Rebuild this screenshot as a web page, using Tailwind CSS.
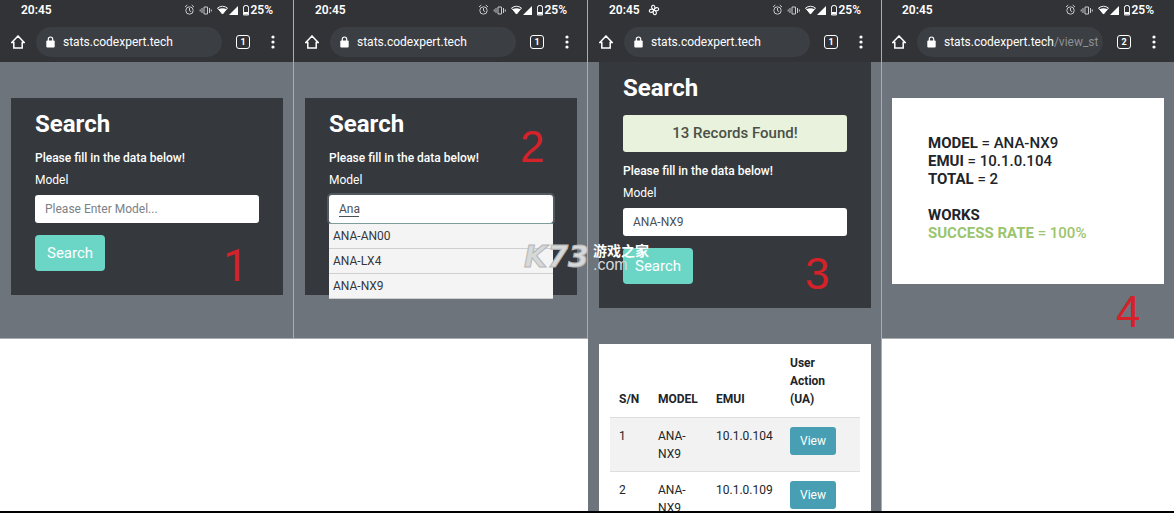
<!DOCTYPE html>
<html lang="en">

<head>
    <meta charset="UTF-8">
    <meta name="viewport" content="width=device-width, initial-scale=1.0">
    <title>Stats - How to search</title>
    <script src="https://cdn.jsdelivr.net/npm/@tailwindcss/browser@4"></script>
</head>

<body class="bg-white font-['Roboto',sans-serif] text-xs leading-[18px] text-[#212529]">
    <!-- shared icons -->
    <svg class="hidden">
        <symbol id="status" viewBox="0 0 66 14">
            <g fill="none" stroke="#c9cacc" stroke-width="1">
                <circle cx="5.500" cy="7.500" r="3.700" />
                <path d="M5.500 5v2.700l1.700 1M1 4l2.300-2M10 4L7.700 2" />
                <path d="M20 4h3.500v7H20zM18 5v5M25.500 5v5M16.200 6.500v2M27.300 6.500v2" />
            </g>
            <path d="M33.500 5q5-3.500 10 0L38.500 11z" fill="none" stroke="#fff" stroke-width=".9" />
            <path d="M34.500 6.200q4-2 8 0L38.500 11.200z" fill="#fff" />
            <path d="M54 3v9h-9z" fill="#fff" />
            <path d="M59.500 3.500h1v-1h3v1h1v8.500h-5z" fill="none" stroke="#e8e8e8" />
            <path d="M60 9h4v2.500h-4z" fill="#fff" />
        </symbol>
        <symbol id="home" viewBox="0 0 14 14">
            <path d="M.8 7.500L7 1l6.200 6.500H11.200V13H2.800V7.500z" fill="none" stroke="#fff" stroke-width="1.500" />
        </symbol>
        <symbol id="lock" viewBox="0 0 9 12">
            <path d="M2.300 5V3.200a2.200 2.200 0 0 1 4.400 0V5" fill="none" stroke="#fff" stroke-width="1.200" />
            <rect x=".3" y="4.500" width="8.400" height="7" rx="1" fill="#fff" />
        </symbol>
        <symbol id="dots" viewBox="0 0 4 14">
            <circle cx="2" cy="2" r="1.600" fill="#fff" />
            <circle cx="2" cy="7" r="1.600" fill="#fff" />
            <circle cx="2" cy="12" r="1.600" fill="#fff" />
        </symbol>
        <symbol id="fan" viewBox="0 0 12 12">
            <g fill="none" stroke="#fff" stroke-width="1.100">
                <path d="M6 6C3 5 3 1.500 5 1.300S7.500 4 6 6z" />
                <path d="M6 6c1-3 4.500-3 4.700-1S8 7.500 6 6z" />
                <path d="M6 6c3 1 3 4.500 1 4.700S4.500 8 6 6z" />
                <path d="M6 6C5 9 1.500 9 1.300 7S4 4.500 6 6z" />
            </g>
        </symbol>
    </svg>

    <div class="relative grid h-screen grid-cols-[294fr_294fr_294fr_292fr] overflow-hidden border-b-2 border-black">

        <!-- step 1 -->
        <section class="relative overflow-hidden">
            <div class="border-r border-b border-[#a9adb2] bg-[#6d747c]">
                <header class="bg-[#323337] pb-[5px] text-white">
                    <div class="flex h-5 items-center justify-between pr-5 pl-[21px] font-semibold">
                        <span>20:45</span>
                        <span class="flex items-center"><svg class="h-[14px] w-[66px]"><use href="#status" /></svg>25%</span>
                    </div>
                    <div class="flex items-center pt-[7px] pr-[18px] pl-[11px]">
                        <a href="#" aria-label="Home"><svg class="size-[14px]"><use href="#home" /></svg></a>
                        <div class="mr-3.5 ml-[11px] flex h-[30px] min-w-0 flex-1 items-center gap-2 rounded-full bg-[#3b3e42] px-2.5">
                            <svg class="h-3 w-[9px] shrink-0"><use href="#lock" /></svg>
                            <span class="truncate">stats.codexpert.tech</span>
                        </div>
                        <button class="size-[14px] rounded-[3px] border border-white text-[9px] leading-3 font-bold">1</button>
                        <button aria-label="Menu" class="ml-[21px]"><svg class="h-[14px] w-1"><use href="#dots" /></svg></button>
                    </div>
                </header>
                <main class="pt-9 pr-2.5 pb-[43px] pl-[11px]">
                    <form class="bg-[#35393d] px-6 pt-3 pb-6 text-white">
                        <h1 class="mb-[11px] text-2xl leading-7 font-bold">Search</h1>
                        <p class="mb-1 font-medium">Please fill in the data below!</p>
                        <label for="model1" class="mb-1.5 block">Model</label>
                        <input id="model1" type="text" placeholder="Please Enter Model..." class="block h-7 w-full rounded-[3px] bg-white px-2.5 text-[#495057] placeholder:text-[#7b8187]">
                        <button type="button" class="mt-3 h-9 rounded bg-[#6cd6c6] px-3 text-[15px]">Search</button>
                    </form>
                </main>
            </div>
            <span class="absolute top-[240px] left-[223px] text-[44px] leading-[52px] text-[#d3222a]">1</span>
        </section>

        <!-- step 2 -->
        <section class="relative overflow-hidden">
            <div class="border-r border-b border-[#a9adb2] bg-[#6d747c]">
                <header class="bg-[#323337] pb-[5px] text-white">
                    <div class="flex h-5 items-center justify-between pr-5 pl-[21px] font-semibold">
                        <span>20:45</span>
                        <span class="flex items-center"><svg class="h-[14px] w-[66px]"><use href="#status" /></svg>25%</span>
                    </div>
                    <div class="flex items-center pt-[7px] pr-[18px] pl-[11px]">
                        <a href="#" aria-label="Home"><svg class="size-[14px]"><use href="#home" /></svg></a>
                        <div class="mr-3.5 ml-[11px] flex h-[30px] min-w-0 flex-1 items-center gap-2 rounded-full bg-[#3b3e42] px-2.5">
                            <svg class="h-3 w-[9px] shrink-0"><use href="#lock" /></svg>
                            <span class="truncate">stats.codexpert.tech</span>
                        </div>
                        <button class="size-[14px] rounded-[3px] border border-white text-[9px] leading-3 font-bold">1</button>
                        <button aria-label="Menu" class="ml-[21px]"><svg class="h-[14px] w-1"><use href="#dots" /></svg></button>
                    </div>
                </header>
                <main class="pt-9 pr-2.5 pb-[43px] pl-[11px]">
                    <form class="bg-[#35393d] px-6 pt-3 pb-6 text-white">
                        <h1 class="mb-[11px] text-2xl leading-7 font-bold">Search</h1>
                        <p class="mb-1 font-medium">Please fill in the data below!</p>
                        <label for="model2" class="mb-1.5 block">Model</label>
                        <!-- suggestions hang over the bottom of the form -->
                        <div class="relative mb-12">
                            <input id="model2" type="text" value="Ana" class="block h-7 w-full rounded-[3px] bg-white px-2.5 text-[#495057] ring-2 ring-[#50595f]">
                            <span class="absolute bottom-1.5 left-2.5 h-px w-5 bg-[#495057]"></span>
                            <ul class="absolute inset-x-0 top-full border-t border-[#7d9c9c] bg-[#f4f4f4] text-[#33373b]">
                                <li class="h-[25px] border-b border-[#cfcfcf] px-1 leading-6">ANA-AN00</li>
                                <li class="h-[25px] border-b border-[#cfcfcf] px-1 leading-6">ANA-LX4</li>
                                <li class="h-[25px] border-b border-[#cfcfcf] px-1 leading-6">ANA-NX9</li>
                            </ul>
                        </div>
                    </form>
                </main>
            </div>
            <span class="absolute top-[121px] left-[226px] font-['Liberation_Sans',sans-serif] text-[44px] leading-[52px] text-[#d3222a]">2</span>
        </section>

        <!-- step 3 -->
        <section class="relative overflow-hidden">
            <div class="min-h-full border-r border-[#a9adb2] bg-[#6d747c]">
                <header class="bg-[#323337] pb-[5px] text-white">
                    <div class="flex h-5 items-center justify-between pr-5 pl-[21px] font-semibold">
                        <span class="flex items-center gap-2">20:45 <svg class="size-3"><use href="#fan" /></svg></span>
                        <span class="flex items-center"><svg class="h-[14px] w-[66px]"><use href="#status" /></svg>25%</span>
                    </div>
                    <div class="flex items-center pt-[7px] pr-[18px] pl-[11px]">
                        <a href="#" aria-label="Home"><svg class="size-[14px]"><use href="#home" /></svg></a>
                        <div class="mr-3.5 ml-[11px] flex h-[30px] min-w-0 flex-1 items-center gap-2 rounded-full bg-[#3b3e42] px-2.5">
                            <svg class="h-3 w-[9px] shrink-0"><use href="#lock" /></svg>
                            <span class="truncate">stats.codexpert.tech</span>
                        </div>
                        <button class="size-[14px] rounded-[3px] border border-white text-[9px] leading-3 font-bold">1</button>
                        <button aria-label="Menu" class="ml-[21px]"><svg class="h-[14px] w-1"><use href="#dots" /></svg></button>
                    </div>
                </header>
                <main class="pr-2.5 pl-[11px]">
                    <form class="bg-[#35393d] px-6 pt-3 pb-6 text-white">
                        <h1 class="mb-[13px] text-2xl leading-7 font-bold">Search</h1>
                        <div class="mb-2.5 h-[37px] rounded-[3px] bg-[#e8f2dc] text-center text-[15px] leading-[37px] font-medium text-[#4a5046]">13 Records Found!</div>
                        <p class="mb-1 font-medium">Please fill in the data below!</p>
                        <label for="model3" class="mb-1.5 block">Model</label>
                        <input id="model3" type="text" value="ANA-NX9" class="block h-7 w-full rounded-[3px] bg-white px-2.5 text-[#495057]">
                        <button type="button" class="mt-3 h-9 rounded bg-[#6cd6c6] px-3 text-[15px]">Search</button>
                    </form>
                    <div class="mt-9 bg-white px-[11px] pt-px">
                        <table class="w-full table-fixed text-left">
                            <thead>
                                <tr class="border-b border-[#dcdfe2] align-bottom">
                                    <th class="w-[39px] py-[9px] pl-[9px]">S/N</th>
                                    <th class="w-[58px] py-[9px] pl-[9px]">MODEL</th>
                                    <th class="w-[74px] py-[9px] pl-[9px]">EMUI</th>
                                    <th class="py-[9px] pr-6 pl-[9px]">User Action (UA)</th>
                                </tr>
                            </thead>
                            <tbody class="align-top">
                                <tr class="border-b border-[#dcdfe2] bg-[#f2f2f2]">
                                    <td class="pt-[9px] pb-2 pl-[9px]">1</td>
                                    <td class="pt-[9px] pr-2 pb-2 pl-[9px]">ANA-NX9</td>
                                    <td class="pt-[9px] pb-2 pl-[9px]">10.1.0.104</td>
                                    <td class="pt-[9px] pb-2 pl-[9px]"><button class="h-7 rounded-[3px] bg-[#489fb3] px-2.5 text-white">View</button></td>
                                </tr>
                                <tr>
                                    <td class="pt-[9px] pb-2 pl-[9px]">2</td>
                                    <td class="pt-[9px] pr-2 pb-2 pl-[9px]">ANA-NX9</td>
                                    <td class="pt-[9px] pb-2 pl-[9px]">10.1.0.109</td>
                                    <td class="pt-[9px] pb-2 pl-[9px]"><button class="h-7 rounded-[3px] bg-[#489fb3] px-2.5 text-white">View</button></td>
                                </tr>
                            </tbody>
                        </table>
                    </div>
                </main>
            </div>
            <span class="absolute top-[248px] left-[217px] font-['Liberation_Sans',sans-serif] text-[44px] leading-[52px] text-[#d3222a]">3</span>
        </section>

        <!-- step 4 -->
        <section class="relative overflow-hidden">
            <div class="border-b border-[#a9adb2] bg-[#6d747c]">
                <header class="bg-[#323337] pb-[5px] text-white">
                    <div class="flex h-5 items-center justify-between pr-5 pl-5 font-semibold">
                        <span>20:45</span>
                        <span class="flex items-center"><svg class="h-[14px] w-[66px]"><use href="#status" /></svg>25%</span>
                    </div>
                    <div class="flex items-center pt-[7px] pr-[18px] pl-2.5">
                        <a href="#" aria-label="Home"><svg class="size-[14px]"><use href="#home" /></svg></a>
                        <div class="mr-3.5 ml-[11px] flex h-[30px] min-w-0 flex-1 items-center gap-2 rounded-full bg-[#3b3e42] pr-1 pl-2.5">
                            <svg class="h-3 w-[9px] shrink-0"><use href="#lock" /></svg>
                            <span class="overflow-hidden whitespace-nowrap">stats.codexpert.tech<span class="text-[#8d9093]">/view_st</span></span>
                        </div>
                        <button class="size-[14px] rounded-[3px] border border-white text-[9px] leading-3 font-bold">2</button>
                        <button aria-label="Menu" class="ml-[21px]"><svg class="h-[14px] w-1"><use href="#dots" /></svg></button>
                    </div>
                </header>
                <main class="px-2.5 pt-9 pb-[54px]">
                    <div class="bg-white px-9 pt-9 pb-[42px] text-[15px] font-medium">
                        <p><b>MODEL</b> = ANA-NX9</p>
                        <p><b>EMUI</b> = 10.1.0.104</p>
                        <p><b>TOTAL</b> = 2</p>
                        <p class="mt-[18px]"><b>WORKS</b></p>
                        <p class="text-[#9bc56d]"><b>SUCCESS RATE</b> = 100%</p>
                    </div>
                </main>
            </div>
            <span class="absolute top-[286px] left-[234px] font-['Liberation_Sans',sans-serif] text-[44px] leading-[52px] text-[#d3222a]">4</span>
        </section>

        <!-- watermark -->
        <div class="absolute top-[241px] left-1/2 -ml-[63px] flex items-center gap-1 text-white">
            <span class="font-['DejaVu_Sans',sans-serif] text-[30px] leading-8 font-bold text-[#d6d8d9] italic [-webkit-text-stroke:1px_#b4b7b9]">K73</span>
            <span class="font-['Noto_Sans_CJK_SC',sans-serif] text-sm leading-[14px] font-bold">游戏之家<br><span class="font-['Liberation_Sans',sans-serif] text-base leading-[14px] font-normal text-[#d6d8d9]">.com</span></span>
        </div>
    </div>
</body>

</html>
